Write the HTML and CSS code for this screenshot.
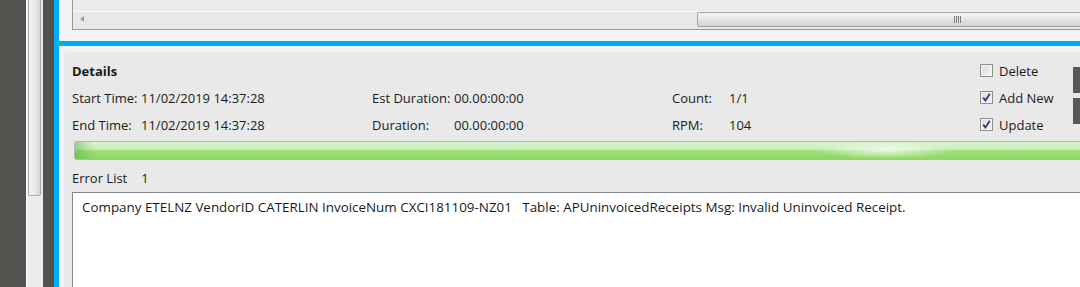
FILE: index.html
```html
<!DOCTYPE html>
<html lang="en">
<head>
  <meta charset="utf-8">
  <title>Process Details</title>
  <link rel="stylesheet" href="styles.css">
</head>
<body>

<div class="desk"></div>

<div class="vscroll">
  <div class="vthumb"></div>
</div>

<div class="desk-gap"></div>
<div class="rail"></div>

<div class="main">
  <!-- bottom edge of the grid above -->
  <div class="top">
    <div class="grid-box">
      <div class="hscroll">
        <span class="arrow-left"></span>
        <div class="hthumb"><span class="grip"></span></div>
      </div>
    </div>
  </div>

  <div class="splitter"></div>

  <div class="details">
    <div class="details-grid">
      <div class="title">Details</div>
      <div></div>
      <div></div>
      <label class="check"><span class="box"></span>Delete</label>
      <div class="side-btns">
        <div class="side-btn"></div>
        <div class="side-btn"></div>
      </div>

      <div class="field"><span class="lbl w1">Start Time:</span>11/02/2019 14:37:28</div>
      <div class="field"><span class="lbl w2">Est Duration:</span>00.00:00:00</div>
      <div class="field"><span class="lbl w3">Count:</span>1/1</div>
      <label class="check"><span class="box checked"><svg viewBox="0 0 9 9"><path d="M1.2 4.6 L3.4 7.4 L7.8 0.8" /></svg></span>Add New</label>

      <div class="field"><span class="lbl w1">End Time:</span>11/02/2019 14:37:28</div>
      <div class="field"><span class="lbl w2">Duration:</span>00.00:00:00</div>
      <div class="field"><span class="lbl w3">RPM:</span>104</div>
      <label class="check"><span class="box checked"><svg viewBox="0 0 9 9"><path d="M1.2 4.6 L3.4 7.4 L7.8 0.8" /></svg></span>Update</label>
    </div>

    <div class="progress"><div class="glow"></div></div>

    <div class="error-head">
      <span>Error List</span>
      <span class="error-count">1</span>
    </div>

    <div class="error-box">
      Company ETELNZ VendorID CATERLIN InvoiceNum CXCI181109-NZ01&nbsp;&nbsp;&nbsp;Table: APUninvoicedReceipts Msg: Invalid Uninvoiced Receipt.
    </div>
  </div>
</div>

</body>
</html>
```

FILE: styles.css
```css
body {
  margin: 0;
  width: 1080px;
  height: 287px;
  overflow: hidden;
  display: flex;
  font-family: "Open Sans", "Noto Sans", sans-serif;
  font-size: 13px;
  color: #1b1b1b;
  background: #54524f;
}

/* Left desktop strip */
.desk {
  width: 26px;
  flex: none;
  background: #54524f;
}

.vscroll {
  width: 17px;
  flex: none;
  background: #ececec;
  border-left: 1px solid #ffffff;
  box-sizing: border-box;
  position: relative;
}

.vthumb {
  position: absolute;
  left: 1px;
  top: -4px;
  width: 13px;
  height: 200px;
  border: 1px solid #a8a8a8;
  border-radius: 2px;
  box-sizing: border-box;
  background: linear-gradient(to right, #f4f4f4, #e6e6e6 60%, #d6d6d6);
}

.desk-gap {
  width: 11px;
  flex: none;
  background: #54524f;
}

.rail {
  width: 5px;
  flex: none;
  background: #00adef;
}

/* Main area */
.main {
  flex: 1;
  display: flex;
  flex-direction: column;
  background: #f2f2f5;
  min-width: 0;
  overflow: hidden;
}

.top {
  height: 30px;
  padding-left: 13px;
  flex: none;
}

.grid-box {
  height: 30px;
  box-sizing: border-box;
  border-left: 1px solid #9a9a9a;
  border-bottom: 1px solid #9a9a9a;
  background: #ebebeb;
  display: flex;
  flex-direction: column;
  justify-content: flex-end;
}

.hscroll {
  height: 17px;
  display: flex;
  align-items: flex-start;
  background: #e8e8e8;
  border-top: 1px solid #f7f7f7;
  position: relative;
}

.arrow-left {
  width: 0;
  height: 0;
  margin: 4px 0 0 7px;
  border-top: 3px solid transparent;
  border-bottom: 3px solid transparent;
  border-right: 4px solid #9c9c9c;
}

.hthumb {
  position: absolute;
  left: 624px;
  top: 0;
  width: 420px;
  height: 15px;
  box-sizing: border-box;
  border: 1px solid #a3a3a3;
  border-radius: 2px;
  background: linear-gradient(to bottom, #f5f5f5, #e6e6e6 50%, #d2d2d2);
}

.grip {
  position: absolute;
  left: 256px;
  top: 3px;
  width: 7px;
  height: 7px;
  background: repeating-linear-gradient(to right, #7a7a7a 0 1px, #e8e8e8 1px 2px);
}

.splitter {
  height: 5px;
  margin: 11px 0 6px 0;
  background: #00adef;
  flex: none;
}

/* Details panel */
.details {
  flex: 1;
  min-height: 0;
  margin-left: 5px;
  background: #e9e9e9;
  border-top-left-radius: 4px;
  padding: 5px 0 0 8px;
  display: flex;
  flex-direction: column;
}

.details-grid {
  display: grid;
  grid-template-columns: 300px 300px 308px 92px 1fr;
  grid-auto-rows: 27px;
  align-items: center;
  flex: none;
}

.title {
  font-weight: bold;
}

.field {
  white-space: nowrap;
}

.lbl {
  display: inline-block;
}

.w1 { width: 69px; }
.w2 { width: 82px; }
.w3 { width: 57px; }

.check {
  display: flex;
  align-items: center;
  gap: 6px;
  white-space: nowrap;
}

.box {
  width: 13px;
  height: 13px;
  box-sizing: border-box;
  border: 1px solid #8e8f8f;
  background: linear-gradient(135deg, #dcdcdc, #f6f6f6);
  box-shadow: inset 0 0 0 1px #f4f4f4;
  display: flex;
  align-items: center;
  justify-content: center;
}

.box svg {
  width: 9px;
  height: 9px;
}

.box path {
  fill: none;
  stroke: #2a3a8a;
  stroke-width: 1.8;
}

.side-btns {
  grid-column: 5;
  grid-row: 1 / span 3;
  align-self: start;
  margin: 10px 0 0 1px;
  display: flex;
  flex-direction: column;
  gap: 5px;
}

.side-btn {
  height: 26px;
  background: #5a5856;
}

/* Progress bar */
.progress {
  flex: none;
  margin: 3px 0 0 2px;
  height: 19px;
  box-sizing: border-box;
  border: 1px solid #b4b4b4;
  border-right: none;
  border-radius: 3px 0 0 3px;
  background: linear-gradient(to bottom, #dbf5ce 0%, #cbefb9 42%, #9cdf78 52%, #8cd866 100%);
  position: relative;
  overflow: hidden;
}

.progress::before {
  content: "";
  position: absolute;
  left: 0;
  top: 0;
  bottom: 0;
  width: 20px;
  background: linear-gradient(to right, rgba(80, 170, 50, 0.45), rgba(80, 170, 50, 0));
}

.glow {
  position: absolute;
  left: 740px;
  top: 0;
  bottom: 0;
  width: 140px;
  background: radial-gradient(ellipse at center, rgba(255, 255, 255, 0.75), rgba(255, 255, 255, 0) 70%);
}

.error-head {
  flex: none;
  height: 32px;
  display: flex;
  align-items: center;
  gap: 14px;
  padding-top: 3px;
  box-sizing: border-box;
}

.error-box {
  flex: 1;
  background: #ffffff;
  border-top: 1px solid #828790;
  border-left: 1px solid #828790;
  padding: 5px 0 0 9px;
  font-size: 13.4px;
  white-space: nowrap;
}
```
